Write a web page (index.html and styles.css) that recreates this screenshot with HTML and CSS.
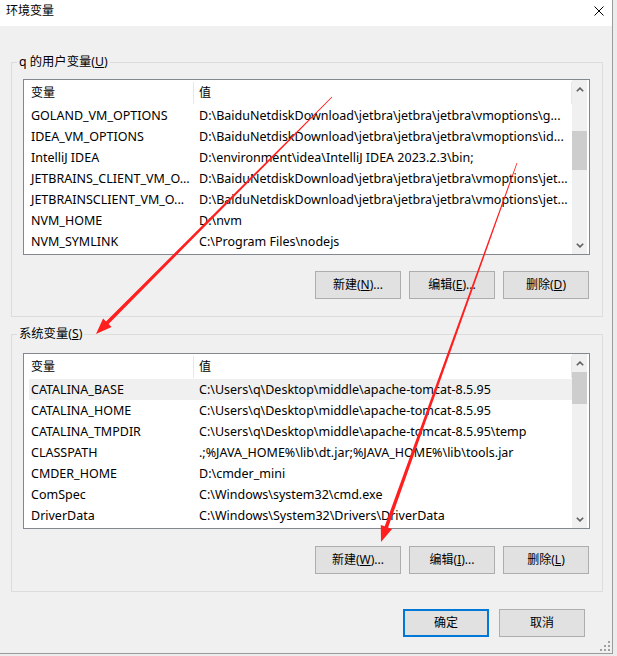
FILE: index.html
```html
<!DOCTYPE html>
<html lang="zh-CN">
<head>
<meta charset="utf-8">
<title>环境变量</title>
<link rel="stylesheet" href="styles.css">
</head>
<body>
<div class="dialog">
  <div class="titlebar">
    <span class="title">环境变量</span>
    <svg class="close" width="10" height="10" viewBox="0 0 10 10"><path d="M0.5 0.5L9.5 9.5M9.5 0.5L0.5 9.5" stroke="#000" stroke-width="1" fill="none"/></svg>
  </div>
  <div class="content">
    <div class="group group-user">
      <div class="group-title">q 的用户变量(<u>U</u>)</div>
      <div class="listview">
        <div class="list-main">
          <div class="lv-header"><div class="h1">变量</div><div class="h2">值</div></div>
          <div class="lv-row"><div class="c1">GOLAND_VM_OPTIONS</div><div class="c2">D:\BaiduNetdiskDownload\jetbra\jetbra\jetbra\vmoptions\g...</div></div>
          <div class="lv-row"><div class="c1">IDEA_VM_OPTIONS</div><div class="c2">D:\BaiduNetdiskDownload\jetbra\jetbra\jetbra\vmoptions\id...</div></div>
          <div class="lv-row"><div class="c1">IntelliJ IDEA</div><div class="c2">D:\environment\idea\IntelliJ IDEA 2023.2.3\bin;</div></div>
          <div class="lv-row"><div class="c1">JETBRAINS_CLIENT_VM_O...</div><div class="c2">D:\BaiduNetdiskDownload\jetbra\jetbra\jetbra\vmoptions\jet...</div></div>
          <div class="lv-row"><div class="c1">JETBRAINSCLIENT_VM_O...</div><div class="c2">D:\BaiduNetdiskDownload\jetbra\jetbra\jetbra\vmoptions\jet...</div></div>
          <div class="lv-row"><div class="c1">NVM_HOME</div><div class="c2">D:\nvm</div></div>
          <div class="lv-row"><div class="c1">NVM_SYMLINK</div><div class="c2">C:\Program Files\nodejs</div></div>
        </div>
        <div class="vscroll">
          <div class="sb-btn"><svg width="8" height="5" viewBox="0 0 8 5"><path d="M0.8 4.3L4 1.1L7.2 4.3" stroke="#606060" stroke-width="1.6" fill="none"/></svg></div>
          <div class="sb-track"><div class="sb-thumb" style="margin-top:33px;height:39px"></div></div>
          <div class="sb-btn"><svg width="8" height="5" viewBox="0 0 8 5"><path d="M0.8 0.7L4 3.9L7.2 0.7" stroke="#606060" stroke-width="1.6" fill="none"/></svg></div>
        </div>
      </div>
      <div class="btn-row">
        <button class="btn">新建(<u>N</u>)...</button>
        <button class="btn">编辑(<u>E</u>)...</button>
        <button class="btn">删除(<u>D</u>)</button>
      </div>
    </div>

    <div class="group group-system">
      <div class="group-title">系统变量(<u>S</u>)</div>
      <div class="listview">
        <div class="list-main">
          <div class="lv-header"><div class="h1">变量</div><div class="h2">值</div></div>
          <div class="lv-row selected"><div class="c1">CATALINA_BASE</div><div class="c2">C:\Users\q\Desktop\middle\apache-tomcat-8.5.95</div></div>
          <div class="lv-row"><div class="c1">CATALINA_HOME</div><div class="c2">C:\Users\q\Desktop\middle\apache-tomcat-8.5.95</div></div>
          <div class="lv-row"><div class="c1">CATALINA_TMPDIR</div><div class="c2">C:\Users\q\Desktop\middle\apache-tomcat-8.5.95\temp</div></div>
          <div class="lv-row"><div class="c1">CLASSPATH</div><div class="c2">.;%JAVA_HOME%\lib\dt.jar;%JAVA_HOME%\lib\tools.jar</div></div>
          <div class="lv-row"><div class="c1">CMDER_HOME</div><div class="c2">D:\cmder_mini</div></div>
          <div class="lv-row"><div class="c1">ComSpec</div><div class="c2">C:\Windows\system32\cmd.exe</div></div>
          <div class="lv-row"><div class="c1">DriverData</div><div class="c2">C:\Windows\System32\Drivers\DriverData</div></div>
        </div>
        <div class="vscroll">
          <div class="sb-btn"><svg width="8" height="5" viewBox="0 0 8 5"><path d="M0.8 4.3L4 1.1L7.2 4.3" stroke="#606060" stroke-width="1.6" fill="none"/></svg></div>
          <div class="sb-track"><div class="sb-thumb" style="margin-top:0px;height:32px"></div></div>
          <div class="sb-btn"><svg width="8" height="5" viewBox="0 0 8 5"><path d="M0.8 0.7L4 3.9L7.2 0.7" stroke="#606060" stroke-width="1.6" fill="none"/></svg></div>
        </div>
      </div>
      <div class="btn-row">
        <button class="btn">新建(<u>W</u>)...</button>
        <button class="btn">编辑(<u>I</u>)...</button>
        <button class="btn">删除(<u>L</u>)</button>
      </div>
    </div>

    <div class="dialog-buttons">
      <button class="btn btn-default">确定</button>
      <button class="btn">取消</button>
    </div>
  </div>
  <svg class="grip" width="10" height="10" viewBox="0 0 10 10" fill="#a0a0a0">
    <rect x="8" y="0" width="2" height="2"/>
    <rect x="4" y="4" width="2" height="2"/><rect x="8" y="4" width="2" height="2"/>
    <rect x="0" y="8" width="2" height="2"/><rect x="4" y="8" width="2" height="2"/><rect x="8" y="8" width="2" height="2"/>
  </svg>
</div>
<svg class="annotations" width="617" height="656" viewBox="0 0 617 656">
  <polygon fill="#ff1f1f" points="332.3,97.3 108.6,324.0 111.6,326.9 96,334 103.1,318.5 106.0,321.4 331.7,96.7"/>
  <polygon fill="#ff1f1f" points="517.4,163.1 388.1,527.5 392.1,528.9 381,542 380.8,524.9 384.7,526.3 516.6,162.9"/>
</svg>
</body>
</html>
```

FILE: styles.css
```css
* {
  box-sizing: border-box;
}

html,
body {
  margin: 0;
  padding: 0;
}

body {
  width: 617px;
  height: 656px;
  overflow: hidden;
  position: relative;
  background: #ececec;
  font-family: "Noto Sans", "Noto Sans CJK SC", sans-serif;
  font-size: 12px;
  color: #000;
}

.dialog {
  position: relative;
  width: 613px;
  height: 654px;
  background: #f0f0f0;
  border-right: 1px solid #9b9b9b;
  border-bottom: 1px solid #9b9b9b;
}

.titlebar {
  height: 26px;
  background: #fff;
  display: flex;
  justify-content: space-between;
  align-items: flex-start;
  padding: 3px 0 0 6px;
}

.title {
  line-height: 16px;
  font-size: 12px;
}

.close {
  display: block;
  margin: 3px 8px 0 0;
}

.content {
  padding: 36px 9px 0 11px;
}

.group {
  border: 1px solid #dcdcdc;
  padding: 0 12px 17px 11px;
}

.group + .group {
  margin-top: 17px;
}

.group-title {
  width: fit-content;
  margin: -9px 0 0 -6px;
  padding: 0 2px;
  background: #f0f0f0;
  line-height: 16px;
  font-size: 12.3px;
}

.listview {
  margin-top: 9px;
  height: 176px;
  border: 1px solid #828790;
  background: #fff;
  display: flex;
}

.group-system .listview {
  margin-top: 11px;
}

.list-main {
  flex: 1;
  min-width: 0;
  overflow: hidden;
}

.lv-header {
  display: flex;
  height: 25px;
  align-items: center;
}

.lv-header .h1 {
  width: 170px;
  padding-left: 7px;
  border-right: 1px solid #e8e8e8;
  line-height: 22px;
}

.lv-header .h2 {
  flex: 1;
  padding-left: 5px;
  border-right: 1px solid #e8e8e8;
  line-height: 22px;
}

.lv-row {
  display: grid;
  grid-template-columns: 165px 1fr;
  height: 21px;
  line-height: 21px;
  margin-left: 5px;
  white-space: nowrap;
  font-size: 12.5px;
}

.lv-row.selected {
  background: #f0f0f0;
}

.c1 {
  padding-left: 2px;
  overflow: hidden;
}

.c2 {
  padding-left: 5px;
  overflow: hidden;
}

.vscroll {
  width: 15px;
  margin-right: 2px;
  background: #f0f0f0;
  display: flex;
  flex-direction: column;
}

.sb-btn {
  height: 18px;
  display: flex;
  align-items: center;
  justify-content: center;
}

.sb-btn svg {
  display: block;
}

.sb-track {
  flex: 1;
}

.sb-thumb {
  background: #cdcdcd;
}

.btn-row {
  display: flex;
  justify-content: flex-end;
  gap: 8px;
  margin-top: 16px;
  padding-right: 1px;
}

.group-system .btn-row {
  margin-top: 17px;
}

.btn {
  width: 86px;
  height: 28px;
  margin: 0;
  padding: 0;
  border: 1px solid #adadad;
  background: #e1e1e1;
  font-family: inherit;
  font-size: 12px;
  line-height: 26px;
  color: #000;
}

.btn-default {
  border: 2px solid #0078d7;
  line-height: 24px;
}

.dialog-buttons {
  display: flex;
  justify-content: flex-end;
  gap: 10px;
  margin-top: 17px;
  padding-right: 18px;
}

.grip {
  position: absolute;
  right: 2px;
  bottom: 2px;
}

.annotations {
  position: absolute;
  left: 0;
  top: 0;
  pointer-events: none;
}
```
